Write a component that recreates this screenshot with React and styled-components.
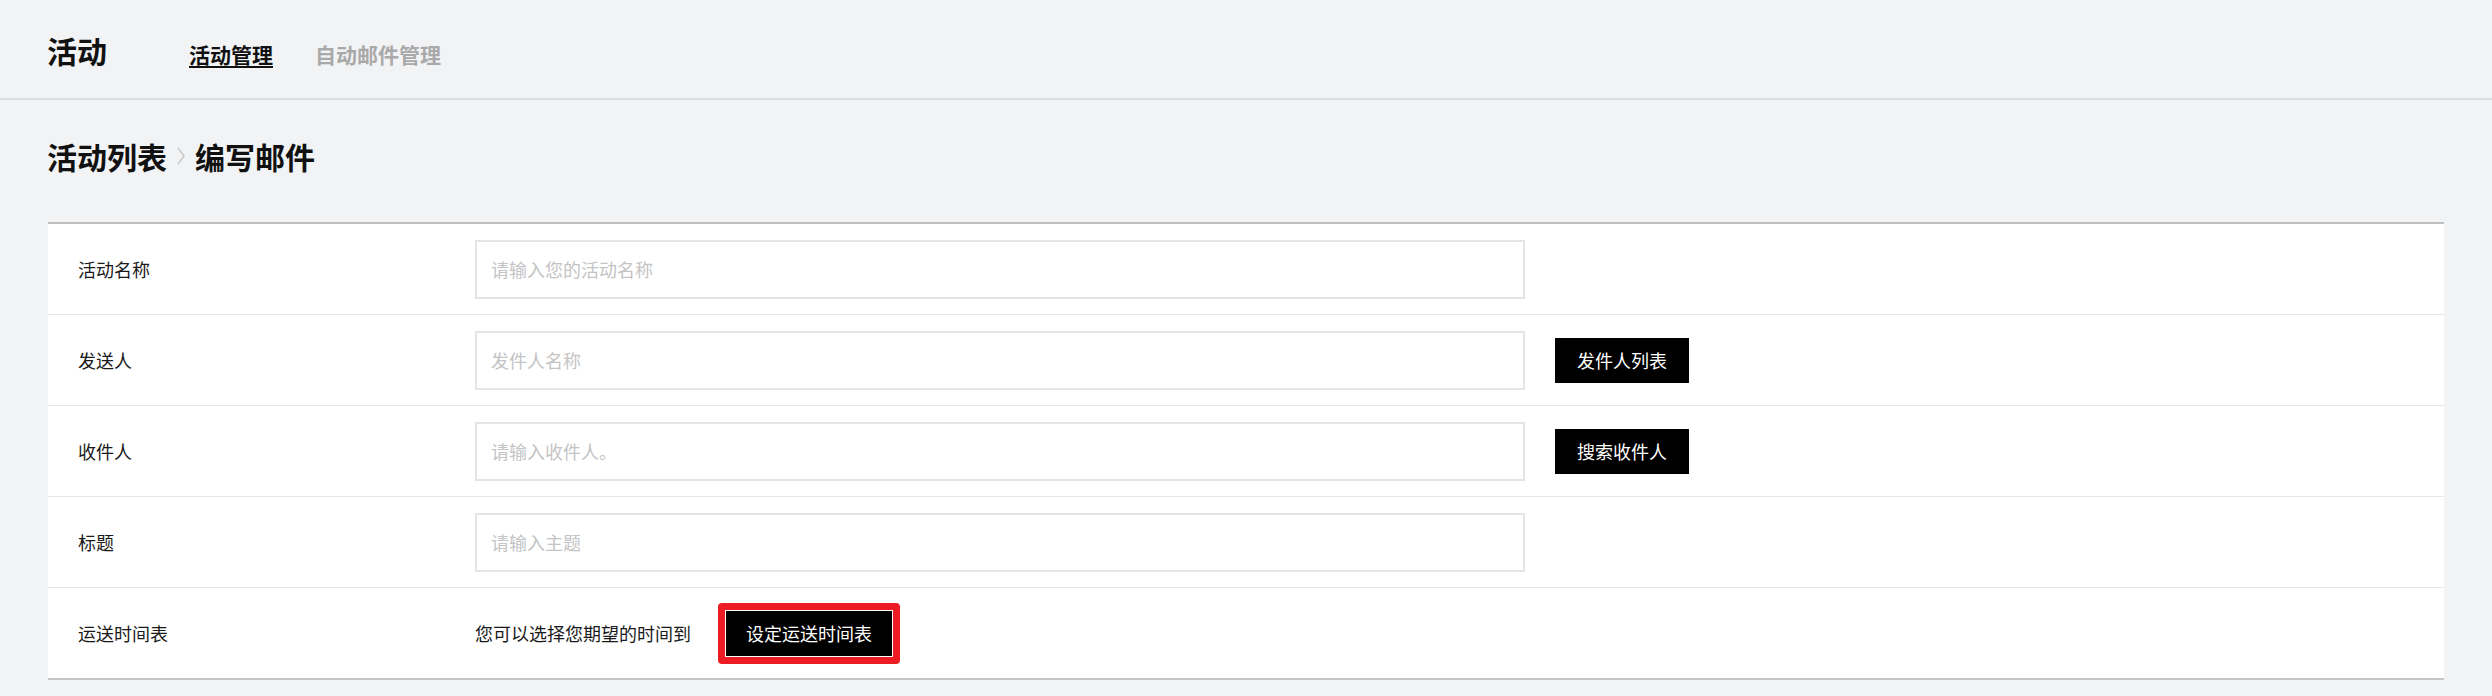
import React from "react";
import styled, { createGlobalStyle } from "styled-components";

const GlobalStyle = createGlobalStyle`
  html, body {
    margin: 0;
    padding: 0;
    background: #f2f3f5;
    font-family: "Noto Sans CJK SC", "Noto Sans", sans-serif;
    color: #222;
  }
  * {
    box-sizing: border-box;
  }
`;

const fields = [
  { label: "活动名称", placeholder: "请输入您的活动名称" },
  { label: "发送人", placeholder: "发件人名称", action: "发件人列表" },
  { label: "收件人", placeholder: "请输入收件人。", action: "搜索收件人" },
  { label: "标题", placeholder: "请输入主题" },
];

export default function App() {
  return (
    <>
      <GlobalStyle />
      <Header>
        <Brand>活动</Brand>
        <Tab $active>活动管理</Tab>
        <Tab>自动邮件管理</Tab>
      </Header>
      <Main>
        <Breadcrumb>
          <span>活动列表</span>
          <Chevron viewBox="0 0 10 20">
            <path d="M2 2 L8 10 L2 18" fill="none" stroke="#cbcbcb" strokeWidth="1.6" />
          </Chevron>
          <span>编写邮件</span>
        </Breadcrumb>
        <Card>
          {fields.map((f) => (
            <Row key={f.label}>
              <Label>{f.label}</Label>
              <Field>
                <Input placeholder={f.placeholder} />
                {f.action && <Button>{f.action}</Button>}
              </Field>
            </Row>
          ))}
          <Row>
            <Label>运送时间表</Label>
            <Field>
              <Hint>您可以选择您期望的时间到</Hint>
              <Highlight>
                <Button>设定运送时间表</Button>
              </Highlight>
            </Field>
          </Row>
        </Card>
      </Main>
    </>
  );
}

const Header = styled.header`
  height: 100px;
  padding: 35px 0 0 47px;
  border-bottom: 2px solid #dcdde0;
  display: flex;
  align-items: baseline;
`;

const Brand = styled.h1`
  margin: 0 82px 0 0;
  font-size: 30px;
  line-height: 30px;
  font-weight: 700;
  color: #111;
`;

const Tab = styled.a`
  margin-right: 42px;
  font-size: 21px;
  line-height: 21px;
  font-weight: 700;
  color: ${(p) => (p.$active ? "#111" : "#a9a9a9")};
  text-decoration: ${(p) => (p.$active ? "underline" : "none")};
  text-decoration-thickness: 2px;
  text-underline-offset: 3px;
  cursor: pointer;
`;

const Main = styled.main`
  padding: 0 48px;
`;

const Breadcrumb = styled.div`
  margin: 41px 0 0 -1px;
  display: flex;
  align-items: center;
  gap: 9px;
  font-size: 30px;
  line-height: 30px;
  font-weight: 700;
  color: #111;
`;

const Chevron = styled.svg`
  width: 10px;
  height: 20px;
`;

const Card = styled.section`
  margin-top: 51px;
  background: #fff;
  border-top: 2px solid #bfbfbf;
  border-bottom: 2px solid #c6c6c6;
`;

const Row = styled.div`
  height: 91px;
  display: grid;
  grid-template-columns: 427px 1fr;
  align-items: center;
  border-bottom: 1px solid #e6e6e6;

  &:last-child {
    height: 90px;
    border-bottom: none;
  }
`;

const Label = styled.div`
  padding-left: 30px;
  font-size: 18px;
  color: #1a1a1a;
`;

const Field = styled.div`
  display: flex;
  align-items: center;
`;

const Input = styled.input`
  width: 1050px;
  height: 59px;
  padding: 0 14px;
  border: 2px solid #e5e5e5;
  outline: none;
  font-family: inherit;
  font-size: 18px;
  color: #222;
  background: #fff;

  &::placeholder {
    color: #c4c4c4;
  }
`;

const Button = styled.button`
  height: 45px;
  margin-left: 30px;
  padding: 0 22px;
  border: none;
  background: #000;
  color: #fff;
  font-family: inherit;
  font-size: 18px;
  cursor: pointer;
`;

const Hint = styled.span`
  font-size: 18px;
  color: #1a1a1a;
`;

const Highlight = styled.div`
  margin-left: 27px;
  padding: 1px;
  border: 7px solid #ed1c24;
  border-radius: 4px;
  background: #fff;
  display: flex;

  ${Button} {
    margin-left: 0;
    padding: 0 20px;
  }
`;
